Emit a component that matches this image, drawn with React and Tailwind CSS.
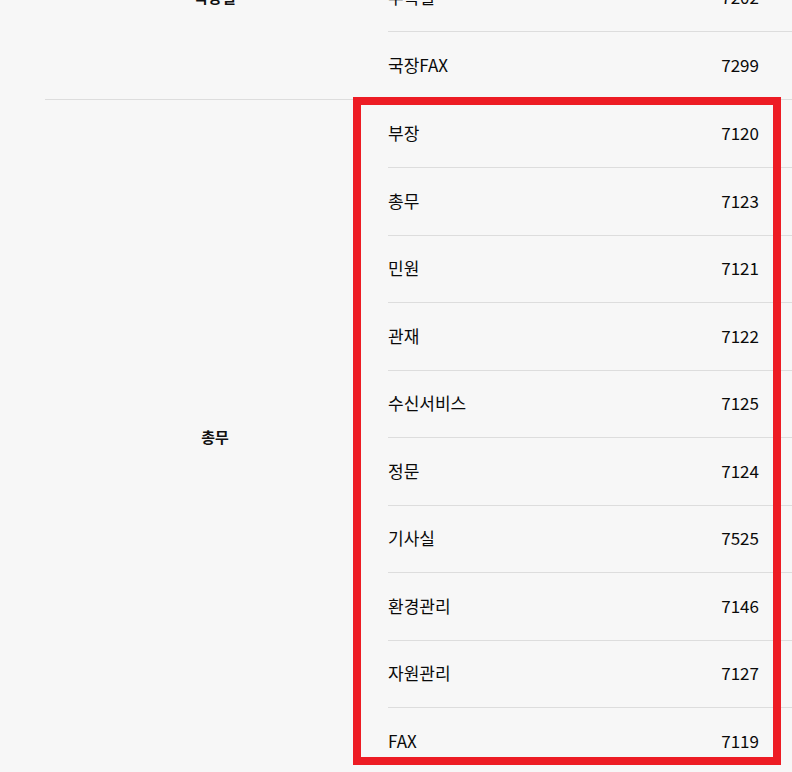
const groups = [
  {
    name: "국장실",
    rows: [
      { label: "국장", ext: "7201" },
      { label: "부속실", ext: "7202" },
      { label: "국장FAX", ext: "7299" },
    ],
  },
  {
    name: "총무",
    highlight: true,
    rows: [
      { label: "부장", ext: "7120" },
      { label: "총무", ext: "7123" },
      { label: "민원", ext: "7121" },
      { label: "관재", ext: "7122" },
      { label: "수신서비스", ext: "7125" },
      { label: "정문", ext: "7124" },
      { label: "기사실", ext: "7525" },
      { label: "환경관리", ext: "7146" },
      { label: "자원관리", ext: "7127" },
      { label: "FAX", ext: "7119" },
    ],
  },
];

function Group({ group, first }) {
  return (
    <div className={`relative flex ${first ? "" : "border-t border-[#dddddd]"}`}>
      <div className="w-[340px] shrink-0 flex items-center justify-center text-[15px] font-bold text-[#111]">
        {group.name}
      </div>
      <div className="flex-1 pl-[3px]">
        {group.rows.map((row, i) => (
          <div
            key={row.label}
            className={`h-[67.5px] flex items-center justify-between pr-[33px] pb-[2px] text-[17px] text-[#0a0a0a] ${
              i > 0 ? "border-t border-[#dddddd]" : ""
            }`}
          >
            <span>{row.label}</span>
            <span>{row.ext}</span>
          </div>
        ))}
      </div>
      {group.highlight && (
        <div className="absolute left-[308px] top-[-3px] w-[428px] h-[668px] border-[8px] border-[#ed1c24] pointer-events-none" />
      )}
    </div>
  );
}

export default function App() {
  return (
    <div
      className="w-[792px] h-[772px] overflow-hidden bg-[#f7f7f7]"
      style={{ fontFamily: '"Noto Sans CJK KR", "Noto Sans", sans-serif' }}
    >
      <div className="pl-[45px] mt-[-104px]">
        {groups.map((g, i) => (
          <Group key={g.name} group={g} first={i === 0} />
        ))}
      </div>
    </div>
  );
}
